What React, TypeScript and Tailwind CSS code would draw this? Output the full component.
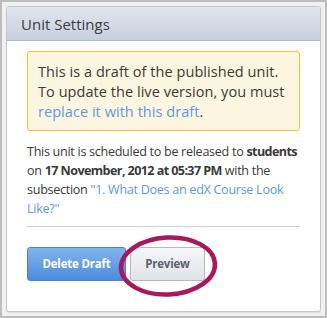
const App = () => {
  return (
    <div className="w-[327px] h-[318px] border-2 border-[#bdbdbd] bg-[#f1f1f1] px-[4px] pt-[4px] pb-[4px] font-['Open_Sans',sans-serif]">
      <div className="relative h-full border border-[#c3c6cc] rounded-[3px] bg-white shadow-[0_1px_1px_rgba(0,0,0,0.08)] overflow-hidden">
        <div className="h-[34px] flex items-center px-[14px] bg-gradient-to-b from-[#e2e6ee] to-[#c6d0de] border-b border-[#b3bbc8]">
          <h2 className="text-[15px] text-[#3d3d3d] leading-none pt-[2px]">Unit Settings</h2>
        </div>
        <div className="px-[20px] pt-[10px]">
          <div className="border border-[#f2c230] bg-[#fcf6e0] rounded-[3px] px-[10px] pt-[10px] pb-[8px] text-[14.5px] leading-[20px] text-[#3a3a3a] tracking-[0.05px]">
            This is a draft of the published unit. To update the live version, you must{" "}
            <a className="text-[#5c9ae6]">replace it with this draft</a>.
          </div>
          <p className="mt-[11px] text-[12.6px] leading-[19px] text-[#3a3a3a] tracking-[-0.3px]">
            This unit is scheduled to be released to <strong className="font-bold tracking-[-0.6px]">students</strong> on{" "}
            <strong className="font-bold tracking-[-0.6px]">17 November, 2012 at 05:37 PM</strong> with the subsection{" "}
            <a className="text-[#5c9ae6]">"1. What Does an edX Course Look Like?"</a>
          </p>
          <div className="mt-[8px] border-t border-[#cfd1d6]" />
          <div className="mt-[20px] flex gap-[4px]">
            <button className="h-[34px] w-[99px] rounded-[3px] border border-[#4a84cf] bg-gradient-to-b from-[#82b3ee] to-[#4c8cdc] text-white text-[11.5px] tracking-[-0.2px] font-bold">
              Delete Draft
            </button>
            <button className="h-[34px] w-[75px] rounded-[3px] border border-[#b4b9c2] bg-gradient-to-b from-[#f5f6f8] to-[#e0e3e8] text-[#5b6170] text-[11.5px] tracking-[-0.2px] font-bold">
              Preview
            </button>
          </div>
        </div>
        <svg className="absolute left-[110px] top-[226px]" width="104" height="66" viewBox="0 0 104 66">
          <ellipse cx="51" cy="33" rx="47" ry="28.5" transform="rotate(-3 51 33)" fill="none" stroke="#a8185c" strokeWidth="4.5" />
        </svg>
      </div>
    </div>
  );
};

export default App;
